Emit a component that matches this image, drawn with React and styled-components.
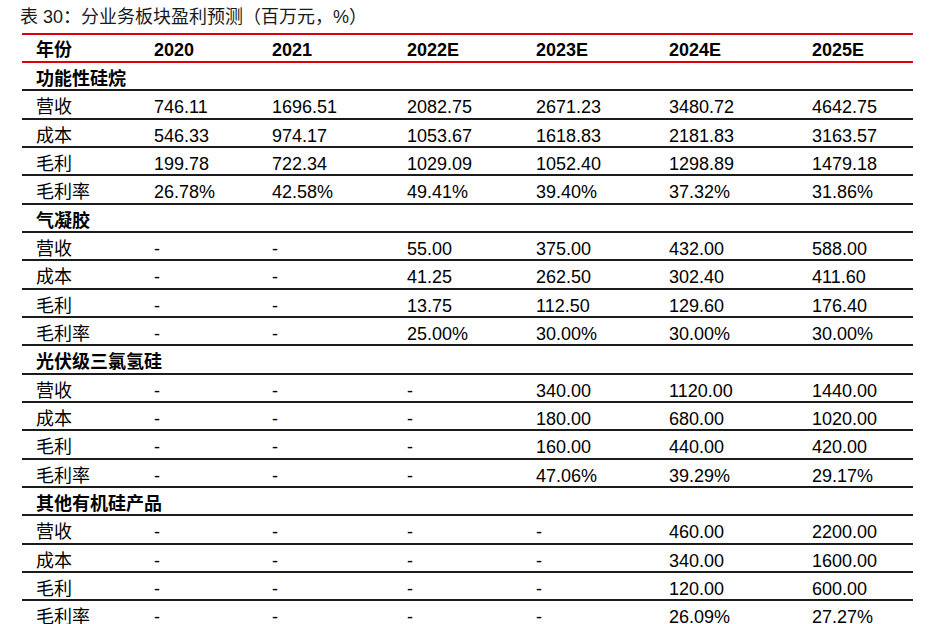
import React from "react";
import styled, { createGlobalStyle } from "styled-components";

const GlobalStyle = createGlobalStyle`
  html, body {
    margin: 0;
    padding: 0;
    background: #fff;
  }
  body {
    font-family: "Liberation Sans", "Noto Sans CJK SC", sans-serif;
    color: #000;
  }
`;

const Page = styled.div`
  width: 932px;
  height: 624px;
  overflow: hidden;
`;

const Caption = styled.div`
  height: 33px;
  line-height: 34px;
  padding-left: 20px;
  font-size: 18px;
  color: #1a1a1a;
`;

const Table = styled.div`
  margin-left: 22px;
  width: 891px;
`;

const Row = styled.div`
  display: grid;
  grid-template-columns: 132px 118px 135px 129px 133px 143px 101px;
  box-sizing: border-box;
  height: ${(p) => (p.$head ? "30px" : "28.33px")};
  align-items: center;
  border-bottom: 2px solid ${(p) => (p.$head ? "#e0000b" : "#1c1c1c")};
  border-top: ${(p) => (p.$head ? "2px solid #e0000b" : "none")};
  font-size: 18px;
  font-weight: ${(p) => (p.$bold ? 700 : 400)};
`;

const Cell = styled.div`
  white-space: nowrap;
  line-height: 20px;
  padding-top: ${(p) => (p.$head ? "4px" : "6px")};
  height: 20px;
  &:first-child {
    padding-left: 14px;
  }
`;

const years = ["年份", "2020", "2021", "2022E", "2023E", "2024E", "2025E"];

const sections = [
  {
    name: "功能性硅烷",
    rows: [
      ["营收", "746.11", "1696.51", "2082.75", "2671.23", "3480.72", "4642.75"],
      ["成本", "546.33", "974.17", "1053.67", "1618.83", "2181.83", "3163.57"],
      ["毛利", "199.78", "722.34", "1029.09", "1052.40", "1298.89", "1479.18"],
      ["毛利率", "26.78%", "42.58%", "49.41%", "39.40%", "37.32%", "31.86%"],
    ],
  },
  {
    name: "气凝胶",
    rows: [
      ["营收", "-", "-", "55.00", "375.00", "432.00", "588.00"],
      ["成本", "-", "-", "41.25", "262.50", "302.40", "411.60"],
      ["毛利", "-", "-", "13.75", "112.50", "129.60", "176.40"],
      ["毛利率", "-", "-", "25.00%", "30.00%", "30.00%", "30.00%"],
    ],
  },
  {
    name: "光伏级三氯氢硅",
    rows: [
      ["营收", "-", "-", "-", "340.00", "1120.00", "1440.00"],
      ["成本", "-", "-", "-", "180.00", "680.00", "1020.00"],
      ["毛利", "-", "-", "-", "160.00", "440.00", "420.00"],
      ["毛利率", "-", "-", "-", "47.06%", "39.29%", "29.17%"],
    ],
  },
  {
    name: "其他有机硅产品",
    rows: [
      ["营收", "-", "-", "-", "-", "460.00", "2200.00"],
      ["成本", "-", "-", "-", "-", "340.00", "1600.00"],
      ["毛利", "-", "-", "-", "-", "120.00", "600.00"],
      ["毛利率", "-", "-", "-", "-", "26.09%", "27.27%"],
    ],
  },
];

export default function App() {
  return (
    <Page>
      <GlobalStyle />
      <Caption>表 30：分业务板块盈利预测（百万元，%）</Caption>
      <Table>
        <Row $head $bold>
          {years.map((y) => (
            <Cell $head key={y}>{y}</Cell>
          ))}
        </Row>
        {sections.map((s) => (
          <React.Fragment key={s.name}>
            <Row $bold>
              <Cell>{s.name}</Cell>
            </Row>
            {s.rows.map((r, i) => (
              <Row key={i}>
                {r.map((c, j) => (
                  <Cell key={j}>{c}</Cell>
                ))}
              </Row>
            ))}
          </React.Fragment>
        ))}
      </Table>
    </Page>
  );
}
